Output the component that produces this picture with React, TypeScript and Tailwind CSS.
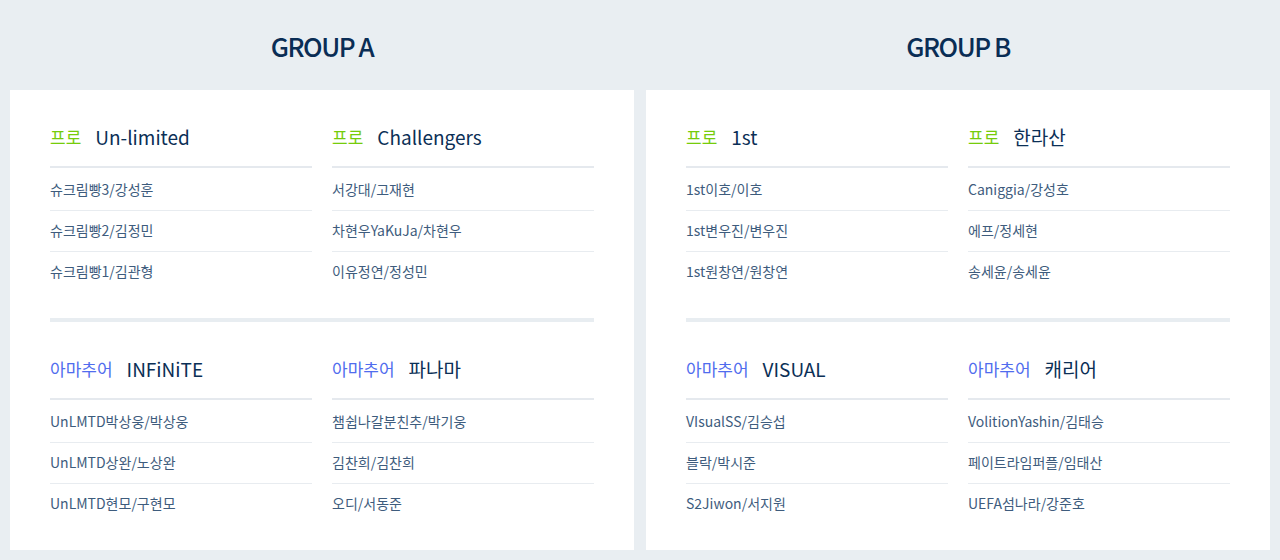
import React from 'react';

type Team = {
  level: 'pro' | 'amateur';
  name: string;
  players: string[];
};

type Group = {
  title: string;
  sections: Team[][];
};

const groups: Group[] = [
  {
    title: 'GROUP A',
    sections: [
      [
        { level: 'pro', name: 'Un-limited', players: ['슈크림빵3/강성훈', '슈크림빵2/김정민', '슈크림빵1/김관형'] },
        { level: 'pro', name: 'Challengers', players: ['서강대/고재현', '차현우YaKuJa/차현우', '이유정연/정성민'] },
      ],
      [
        { level: 'amateur', name: 'INFiNiTE', players: ['UnLMTD박상웅/박상웅', 'UnLMTD상완/노상완', 'UnLMTD현모/구현모'] },
        { level: 'amateur', name: '파나마', players: ['챔쉽나갈분친추/박기웅', '김찬희/김찬희', '오디/서동준'] },
      ],
    ],
  },
  {
    title: 'GROUP B',
    sections: [
      [
        { level: 'pro', name: '1st', players: ['1st이호/이호', '1st변우진/변우진', '1st원창연/원창연'] },
        { level: 'pro', name: '한라산', players: ['Caniggia/강성호', '에프/정세현', '송세윤/송세윤'] },
      ],
      [
        { level: 'amateur', name: 'VISUAL', players: ['VIsualSS/김승섭', '블락/박시준', 'S2Jiwon/서지원'] },
        { level: 'amateur', name: '캐리어', players: ['VolitionYashin/김태승', '페이트라임퍼플/임태산', 'UEFA섬나라/강준호'] },
      ],
    ],
  },
];

const font = { fontFamily: '"Noto Sans CJK KR", "Noto Sans", sans-serif' };

const TeamCard: React.FC<{ team: Team }> = ({ team }) => (
  <div>
    <div className="flex items-center gap-[14px] h-[28px] mt-[33px] mb-[15px]">
      <span
        className={`text-[17px] leading-[28px] ${
          team.level === 'pro' ? 'text-[#76cc0a]' : 'text-[#506cee]'
        }`}
      >
        {team.level === 'pro' ? '프로' : '아마추어'}
      </span>
      <span className="text-[19px] leading-[28px] text-[#0b2f56]">{team.name}</span>
    </div>
    <ul className="border-t-2 border-[#e5e9ee] pt-[2px]">
      {team.players.map((p, i) => (
        <li
          key={p}
          className={`h-[41px] pb-[1px] flex items-center text-[14px] text-[#3e5c7d] border-b ${
            i < team.players.length - 1 ? 'border-[#e8ecf0]' : 'border-transparent'
          }`}
        >
          {p}
        </li>
      ))}
    </ul>
  </div>
);

export default function App() {
  return (
    <div className="w-[1280px] h-[560px] bg-[#e9eef2] px-[10px] flex gap-[12px]" style={font}>
      {groups.map((g) => (
        <div key={g.title} className="flex-1 flex flex-col">
          <div className="h-[90px] flex items-center justify-center">
            <h2 className="text-[26px] font-medium tracking-[-1.5px] text-[#0a2d55]">{g.title}</h2>
          </div>
          <div className="bg-white px-[40px] h-[460px]">
            {g.sections.map((sec, si) => (
              <div
                key={si}
                className={`grid grid-cols-2 gap-[20px] pb-[25px] ${si > 0 ? 'border-t-4 border-[#e8edf1]' : ''}`}
              >
                {sec.map((t) => (
                  <TeamCard key={t.name} team={t} />
                ))}
              </div>
            ))}
          </div>
        </div>
      ))}
    </div>
  );
}
